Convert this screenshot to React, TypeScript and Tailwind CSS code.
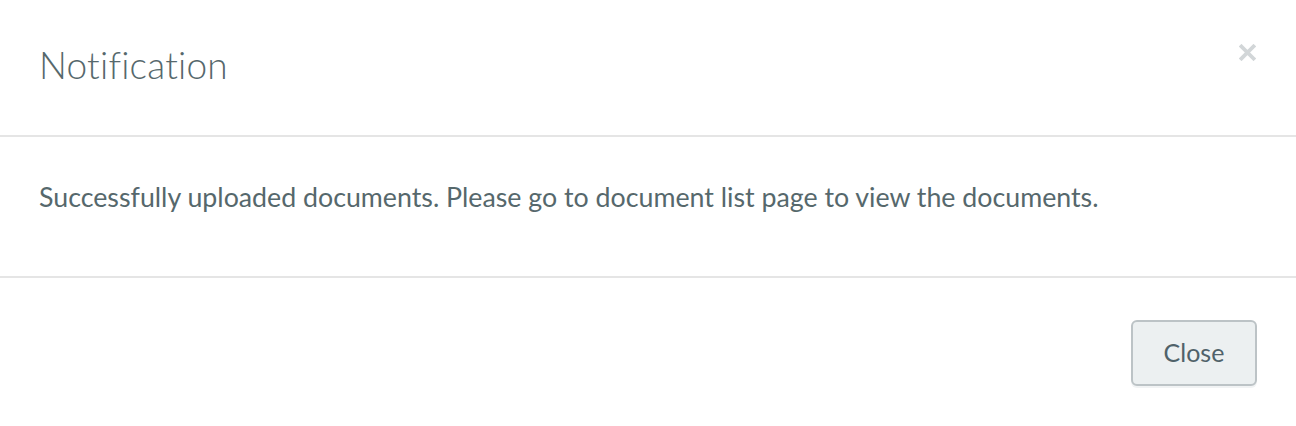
import React from 'react';

export default function App() {
    return (
        <div
            className="w-[1296px] h-[426px] bg-white flex flex-col text-[#56686c]"
            style={{ fontFamily: 'Lato, "Liberation Sans", sans-serif' }}
        >
            {/* Header */}
            <div className="h-[137px] shrink-0 flex items-start justify-between border-b-2 border-[#e5e5e5] pl-[39px] pr-[40px]">
                <h4 className="mt-[43px] text-[37px] leading-[44px] font-light tracking-[0.2px]">Notification</h4>
                <button className="mt-[44px] w-[17px] h-[17px] text-[#d2d6d8]">
                    <svg viewBox="0 0 17 17" className="w-[17px] h-[17px]">
                        <path d="M2.5 2.5 L14.5 14.5 M14.5 2.5 L2.5 14.5" stroke="currentColor" strokeWidth="3.8" strokeLinecap="square" />
                    </svg>
                </button>
            </div>

            {/* Body */}
            <div className="h-[141px] shrink-0 border-b-2 border-[#e5e5e5] px-[39px] pt-[44px]">
                <p className="text-[26.75px] leading-[32px]">
                    Successfully uploaded documents. Please go to document list page to view the documents.
                </p>
            </div>

            {/* Footer */}
            <div className="flex-1 flex justify-end items-start pt-[42px] pr-[39px]">
                <button className="w-[126px] h-[66px] rounded-[6px] border-2 border-[#bcc3c6] bg-[#ecf0f1] text-[25px] text-[#50626a] shadow-[0_2px_0_#f1f3f4]">
                    Close
                </button>
            </div>
        </div>
    );
}
